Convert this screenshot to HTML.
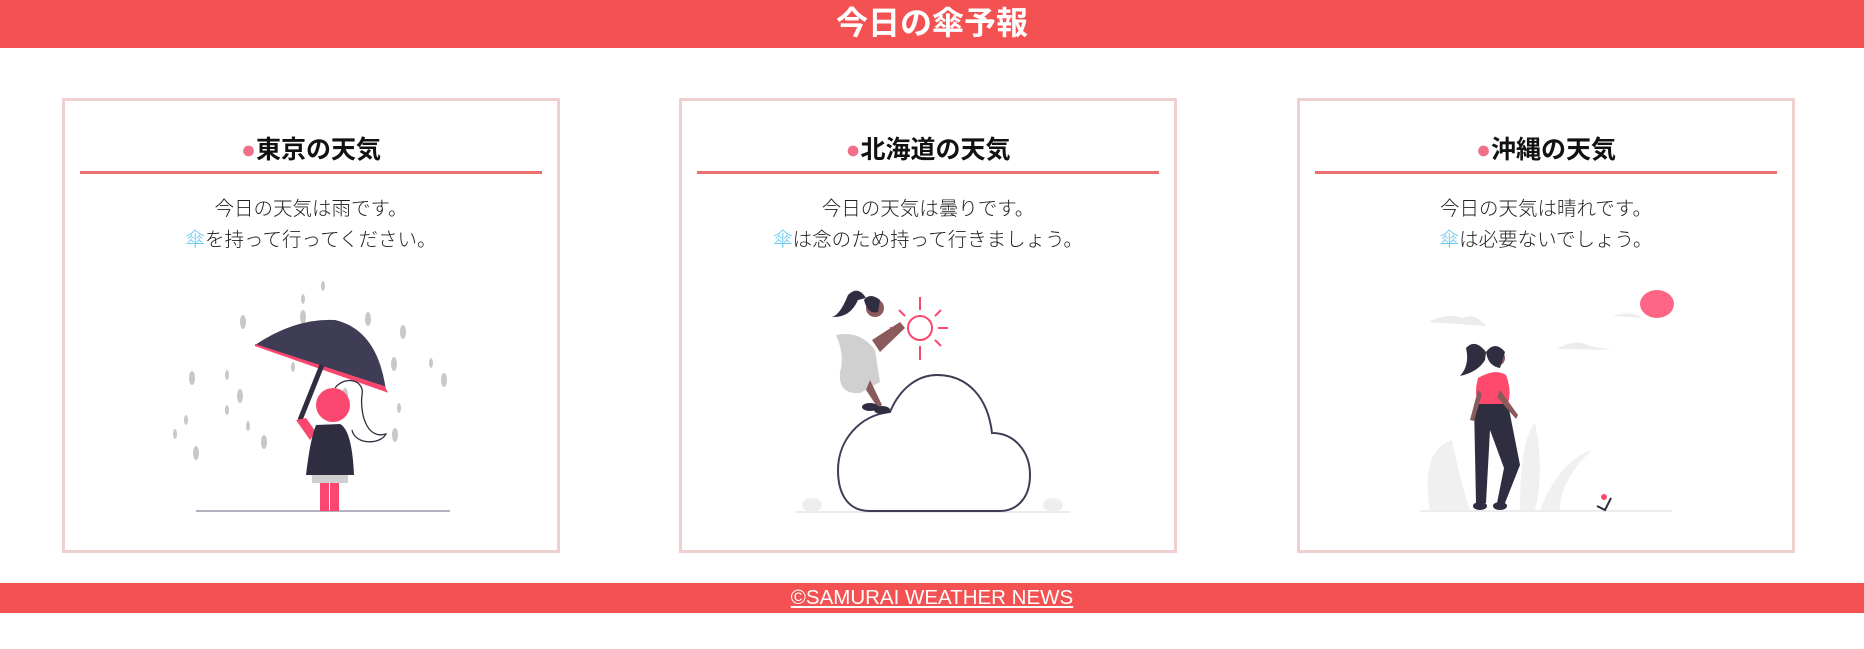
<!DOCTYPE html>
<html><head><meta charset="utf-8"><style>
*{margin:0;padding:0;box-sizing:border-box}
body{width:1864px;height:649px;background:#fff;font-family:"Liberation Sans","Noto Sans CJK JP",sans-serif;position:relative;overflow:hidden}
.hd{position:absolute;left:0;top:0;width:1864px;height:48px;background:#f45252;color:#fff;font-size:32px;font-weight:bold;text-align:center;line-height:46px}
.card{position:absolute;top:98px;width:498px;height:455px;border:3px solid #f0cfcf}
.t{position:absolute;left:15px;right:15px;top:32px;height:41px;border-bottom:3px solid #ea7070;text-align:center;font-size:25px;font-weight:bold;line-height:34px;color:#111}
.t span{color:#ef7088;font-size:25px}
.b{position:absolute;left:0;right:0;top:93px;text-align:center;font-size:19.5px;line-height:31px;color:#222;font-weight:300}
.u{color:#5cc6f2}
.ft{position:absolute;left:0;top:583px;width:1864px;height:30px;background:#f45252;text-align:center;line-height:30px;font-size:20.5px}
.ft a{color:#fff;text-decoration:underline}
svg{position:absolute;left:0;top:0}
</style></head><body>
<div class="hd">今日の傘予報</div>
<div class="card" style="left:62px"><div class="t"><span>●</span>東京の天気</div><div class="b">今日の天気は雨です。<br><span class="u">傘</span>を持って行ってください。</div></div>
<div class="card" style="left:679px"><div class="t"><span>●</span>北海道の天気</div><div class="b">今日の天気は曇りです。<br><span class="u">傘</span>は念のため持って行きましょう。</div></div>
<div class="card" style="left:1297px"><div class="t"><span>●</span>沖縄の天気</div><div class="b">今日の天気は晴れです。<br><span class="u">傘</span>は必要ないでしょう。</div></div>
<div class="ft"><a>©SAMURAI WEATHER NEWS</a></div>
<svg width="1864" height="649" viewBox="0 0 1864 649">
<g fill="#c8c8c8">
<ellipse cx="243" cy="322" rx="3" ry="7"/><ellipse cx="303" cy="317" rx="3" ry="7"/><ellipse cx="323" cy="286" rx="2" ry="5"/><ellipse cx="303" cy="299" rx="2" ry="5"/><ellipse cx="368" cy="319" rx="3" ry="7"/><ellipse cx="403" cy="332" rx="3" ry="7"/><ellipse cx="444" cy="380" rx="3" ry="7"/><ellipse cx="192" cy="378" rx="3" ry="7"/><ellipse cx="240" cy="396" rx="3" ry="7"/><ellipse cx="293" cy="367" rx="2" ry="5"/><ellipse cx="196" cy="453" rx="3" ry="7"/><ellipse cx="264" cy="442" rx="3" ry="7"/><ellipse cx="394" cy="364" rx="3" ry="7"/><ellipse cx="395" cy="435" rx="3" ry="7"/><ellipse cx="175" cy="434" rx="2" ry="5"/><ellipse cx="248" cy="426" rx="2" ry="5"/><ellipse cx="345" cy="395" rx="3" ry="7"/><ellipse cx="399" cy="408" rx="2" ry="5"/><ellipse cx="431" cy="363" rx="2" ry="5"/><ellipse cx="227" cy="375" rx="2" ry="5"/><ellipse cx="227" cy="410" rx="2" ry="5"/><ellipse cx="186" cy="420" rx="2" ry="5"/><ellipse cx="370" cy="366" rx="2" ry="5"/></g>
<line x1="196" y1="511" x2="450" y2="511" stroke="#9a98a8" stroke-width="1.5"/>
<path d="M255,345 Q295,318 335,320 Q378,330 386,391 Z" fill="#3f3d56"/>
<path d="M255,345 L386,391 L384,387 Z" fill="#f9476f" stroke="#f9476f" stroke-width="2"/>
<line x1="322" y1="365" x2="300" y2="420" stroke="#2f2e41" stroke-width="5"/>
<path d="M335,388 C345,375 365,380 362,395 C360,410 365,440 386,434 C380,445 355,445 352,430" fill="none" stroke="#2f2e41" stroke-width="1.3"/>
<circle cx="333" cy="405" r="17" fill="#f9476f"/>
<path d="M296,420 L306,418 L316,432 L310,440 Z" fill="#f9476f"/>
<path d="M316,425 L340,424 Q352,430 354,475 L306,475 Q310,440 316,425 Z" fill="#2f2e41"/>
<rect x="312" y="475" width="36" height="8" fill="#cfcfcf"/>
<rect x="320" y="483" width="9" height="28" fill="#f9476f"/><rect x="330" y="483" width="9" height="28" fill="#f9476f"/>
<line x1="795" y1="512" x2="1070" y2="512" stroke="#e6e6e6" stroke-width="1.5"/>
<ellipse cx="812" cy="505" rx="10" ry="7" fill="#eee"/><ellipse cx="1053" cy="505" rx="10" ry="7" fill="#eee"/>
<path d="M870,511 C845,511 838,490 838,470 C838,440 860,415 890,412 C900,388 918,375 937,375 C968,375 988,398 992,433 C1015,433 1030,452 1030,475 C1030,500 1015,511 1000,511 Z" fill="#fff" stroke="#3f3d56" stroke-width="2"/>
<g stroke="#f9476f" stroke-width="2" fill="none"><circle cx="920" cy="328" r="12"/><line x1="920" y1="297" x2="920" y2="310"/><line x1="920" y1="346" x2="920" y2="360"/><line x1="890" y1="328" x2="902" y2="328"/><line x1="938" y1="328" x2="948" y2="328"/><line x1="899" y1="310" x2="905" y2="316"/><line x1="935" y1="316" x2="941" y2="310"/><line x1="935" y1="340" x2="941" y2="346"/></g>
<path d="M836,335 Q860,330 875,350 L880,382 L860,393 Q838,395 840,372 Q845,355 836,335 Z" fill="#d0d0d0"/>
<path d="M872,340 L900,322 L905,328 L880,352 Z" fill="#8b5a5a"/>
<path d="M870,380 L882,405 L878,408 L866,390 Z" fill="#8b5a5a"/>
<ellipse cx="870" cy="407" rx="8" ry="4" fill="#2f2e41"/><ellipse cx="882" cy="410" rx="8" ry="4" fill="#2f2e41"/>
<circle cx="875" cy="308" r="9" fill="#8b5a5a"/>
<path d="M864,300 Q870,292 880,300 L878,312 Q868,315 864,300 Z M866,298 Q858,285 848,295 Q840,315 832,317 Q850,318 858,300" fill="#2f2e41"/>
<line x1="1420" y1="511" x2="1672" y2="511" stroke="#e6e6e6" stroke-width="1.5"/>
<ellipse cx="1657" cy="304" rx="17" ry="14" fill="#ff6584"/>
<path d="M1428,322 Q1450,312 1462,318 Q1475,312 1486,326 Z" fill="#ececec"/>
<path d="M1557,349 Q1575,338 1590,346 L1612,350 Z" fill="#ececec"/>
<path d="M1613,316 Q1630,310 1642,318 L1645,318 Z" fill="#ececec"/>
<path d="M1430,510 Q1420,450 1452,440 Q1460,480 1470,510 Z M1520,510 Q1520,440 1535,423 Q1545,470 1535,510 Z M1540,510 Q1560,460 1592,450 Q1560,480 1560,510 Z" fill="#f0f0f0"/>
<path d="M1478,378 Q1495,368 1506,375 Q1512,390 1508,404 L1478,404 Q1474,392 1478,378 Z" fill="#ff4a6e"/>
<path d="M1474,404 L1508,404 L1520,465 L1505,503 L1497,503 L1504,468 L1490,430 L1486,503 L1476,503 Z" fill="#2f2e41"/>
<path d="M1478,390 L1470,420 L1474,421 L1482,394 Z M1500,390 L1518,415 L1516,419 L1497,397 Z" fill="#8b5a5a"/>
<ellipse cx="1480" cy="506" rx="7" ry="4" fill="#2f2e41"/><ellipse cx="1500" cy="506" rx="7" ry="4" fill="#2f2e41"/>
<circle cx="1497" cy="358" r="8" fill="#8b5a5a"/>
<path d="M1486,352 Q1495,340 1505,352 L1500,368 Q1488,366 1486,352 Z M1486,352 Q1475,338 1466,348 Q1470,365 1460,376 Q1478,372 1485,360" fill="#2f2e41"/>
<circle cx="1604" cy="497" r="3" fill="#ff4a6e"/><path d="M1597,506 L1605,510 L1611,498" stroke="#2f2e41" stroke-width="2" fill="none"/>
</svg>
</body></html>
